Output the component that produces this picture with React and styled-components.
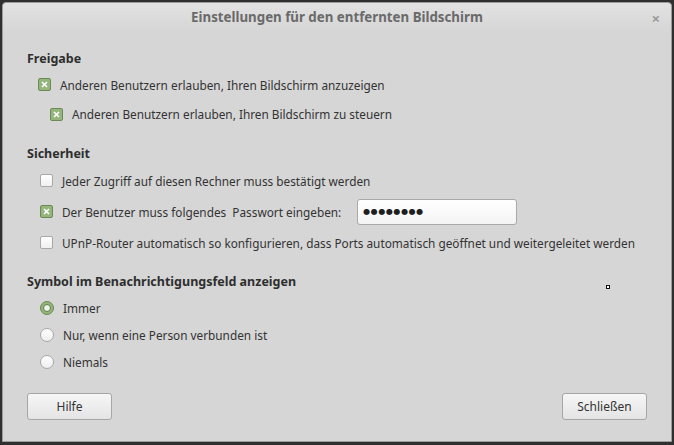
import React from "react";
import styled, { createGlobalStyle } from "styled-components";

const GlobalStyle = createGlobalStyle`
  html, body {
    margin: 0;
    padding: 0;
    background: #2f2f2f;
  }
  body {
    font-family: "Noto Sans", "DejaVu Sans", sans-serif;
    font-size: 11.8px;
    color: #333;
  }
`;

const Window = styled.div`
  position: relative;
  box-sizing: border-box;
  width: 670px;
  height: 440px;
  margin: 2px 0 0 2px;
  background: #d6d6d6;
  border: 1px solid #9c9c9c;
  border-radius: 4px 4px 0 0;
  display: flex;
  flex-direction: column;
`;

const TitleBar = styled.div`
  height: 28px;
  display: flex;
  align-items: center;
  justify-content: center;
  position: relative;
  background: linear-gradient(#e2e2e2, #d6d6d6);
  border-radius: 4px 4px 0 0;
  color: #6a6a6a;
  font-weight: 700;
  font-size: 13.3px;
`;

const Close = styled.span`
  position: absolute;
  right: 11px;
  top: 5px;
  color: #9a9a9a;
  font-size: 15px;
  font-weight: 700;
`;

const Body = styled.div`
  flex: 1;
  display: flex;
  flex-direction: column;
  padding: 18px 24px 0 24px;
`;

const Section = styled.div`
  display: flex;
  flex-direction: column;
  margin-bottom: ${(p) => p.$gap || 0}px;
`;

const Heading = styled.div`
  font-weight: 700;
  font-size: 12.5px;
  color: #2e2e2e;
  height: 20px;
  line-height: 20px;
  margin-bottom: ${(p) => p.$after || 0}px;
`;

const Row = styled.div`
  display: flex;
  align-items: center;
  height: ${(p) => p.$h || 27}px;
  padding-left: ${(p) => p.$indent || 13}px;
  gap: 9px;
  white-space: nowrap;
`;

const Box = styled.span`
  box-sizing: border-box;
  width: 13px;
  height: 13px;
  flex: none;
  border-radius: 2px;
  border: 1px solid ${(p) => (p.$on ? "#6d8a55" : "#a8a8a8")};
  background: ${(p) =>
    p.$on ? "#94b57b" : "linear-gradient(#ffffff, #f0f0f0)"};
  display: flex;
  align-items: center;
  justify-content: center;
`;

const Radio = styled.span`
  box-sizing: border-box;
  width: 14px;
  height: 14px;
  flex: none;
  border-radius: 50%;
  border: 1px solid ${(p) => (p.$on ? "#6d8a55" : "#a8a8a8")};
  background: ${(p) => (p.$on ? "#94b57b" : "linear-gradient(#ffffff, #eeeeee)")};
  display: flex;
  align-items: center;
  justify-content: center;
  &::after {
    content: "";
    display: ${(p) => (p.$on ? "block" : "none")};
    width: 6px;
    height: 6px;
    border-radius: 50%;
    background: #eef4e8;
    border: 1px solid #5f7a48;
  }
`;

const Entry = styled.div`
  box-sizing: border-box;
  width: 160px;
  height: 26px;
  margin-left: 7px;
  border: 1px solid #a9a9a9;
  border-radius: 3px;
  background: linear-gradient(#ffffff, #f4f4f4);
  display: flex;
  align-items: center;
  padding-left: 5px;
  font-family: "DejaVu Sans", sans-serif;
  font-size: 8px;
  letter-spacing: 0.6px;
  color: #1e1e1e;
`;

const Footer = styled.div`
  display: flex;
  justify-content: space-between;
  padding: 0 24px;
  margin-top: auto;
  height: 48px;
`;

const Button = styled.button`
  box-sizing: border-box;
  width: 85px;
  height: 27px;
  font-family: inherit;
  font-size: 12px;
  color: #333;
  border: 1px solid #a6a6a6;
  border-radius: 3px;
  background: linear-gradient(#f6f6f6, #e4e4e4);
  padding: 0;
`;

const Speck = styled.span`
  position: absolute;
  left: 603px;
  top: 282px;
  width: 4px;
  height: 4px;
  box-sizing: border-box;
  border: 1px solid #111;
  background: #fff;
`;

function Check({ on }) {
  return (
    <Box $on={on}>
      {on && (
        <svg width="7" height="7" viewBox="0 0 7 7">
          <path d="M1 1L6 6M6 1L1 6" stroke="#fff" strokeWidth="1.6" />
        </svg>
      )}
    </Box>
  );
}

export default function App() {
  return (
    <>
      <GlobalStyle />
      <Window>
        <TitleBar>
          Einstellungen für den entfernten Bildschirm
          <Close>×</Close>
        </TitleBar>
        <Body>
          <Section $gap={14}>
            <Heading $after={2}>Freigabe</Heading>
            <Row $indent={11} $h={27}>
              <Check on />
              Anderen Benutzern erlauben, Ihren Bildschirm anzuzeigen
            </Row>
            <Row $indent={23} $h={32}>
              <Check on />
              Anderen Benutzern erlauben, Ihren Bildschirm zu steuern
            </Row>
          </Section>
          <Section $gap={16}>
            <Heading $after={3}>Sicherheit</Heading>
            <Row>
              <Check />
              Jeder Zugriff auf diesen Rechner muss bestätigt werden
            </Row>
            <Row $h={35}>
              <Check on />
              Der Benutzer muss folgendes&nbsp; Passwort eingeben:
              <Entry>●●●●●●●●</Entry>
            </Row>
            <Row>
              <Check />
              UPnP-Router automatisch so konfigurieren, dass Ports automatisch geöffnet und weitergeleitet werden
            </Row>
          </Section>
          <Section>
            <Heading $after={2}>Symbol im Benachrichtigungsfeld anzeigen</Heading>
            <Row>
              <Radio $on />
              Immer
            </Row>
            <Row>
              <Radio />
              Nur, wenn eine Person verbunden ist
            </Row>
            <Row>
              <Radio />
              Niemals
            </Row>
          </Section>
        </Body>
        <Footer>
          <Button>Hilfe</Button>
          <Button>Schließen</Button>
        </Footer>
        <Speck />
      </Window>
    </>
  );
}
